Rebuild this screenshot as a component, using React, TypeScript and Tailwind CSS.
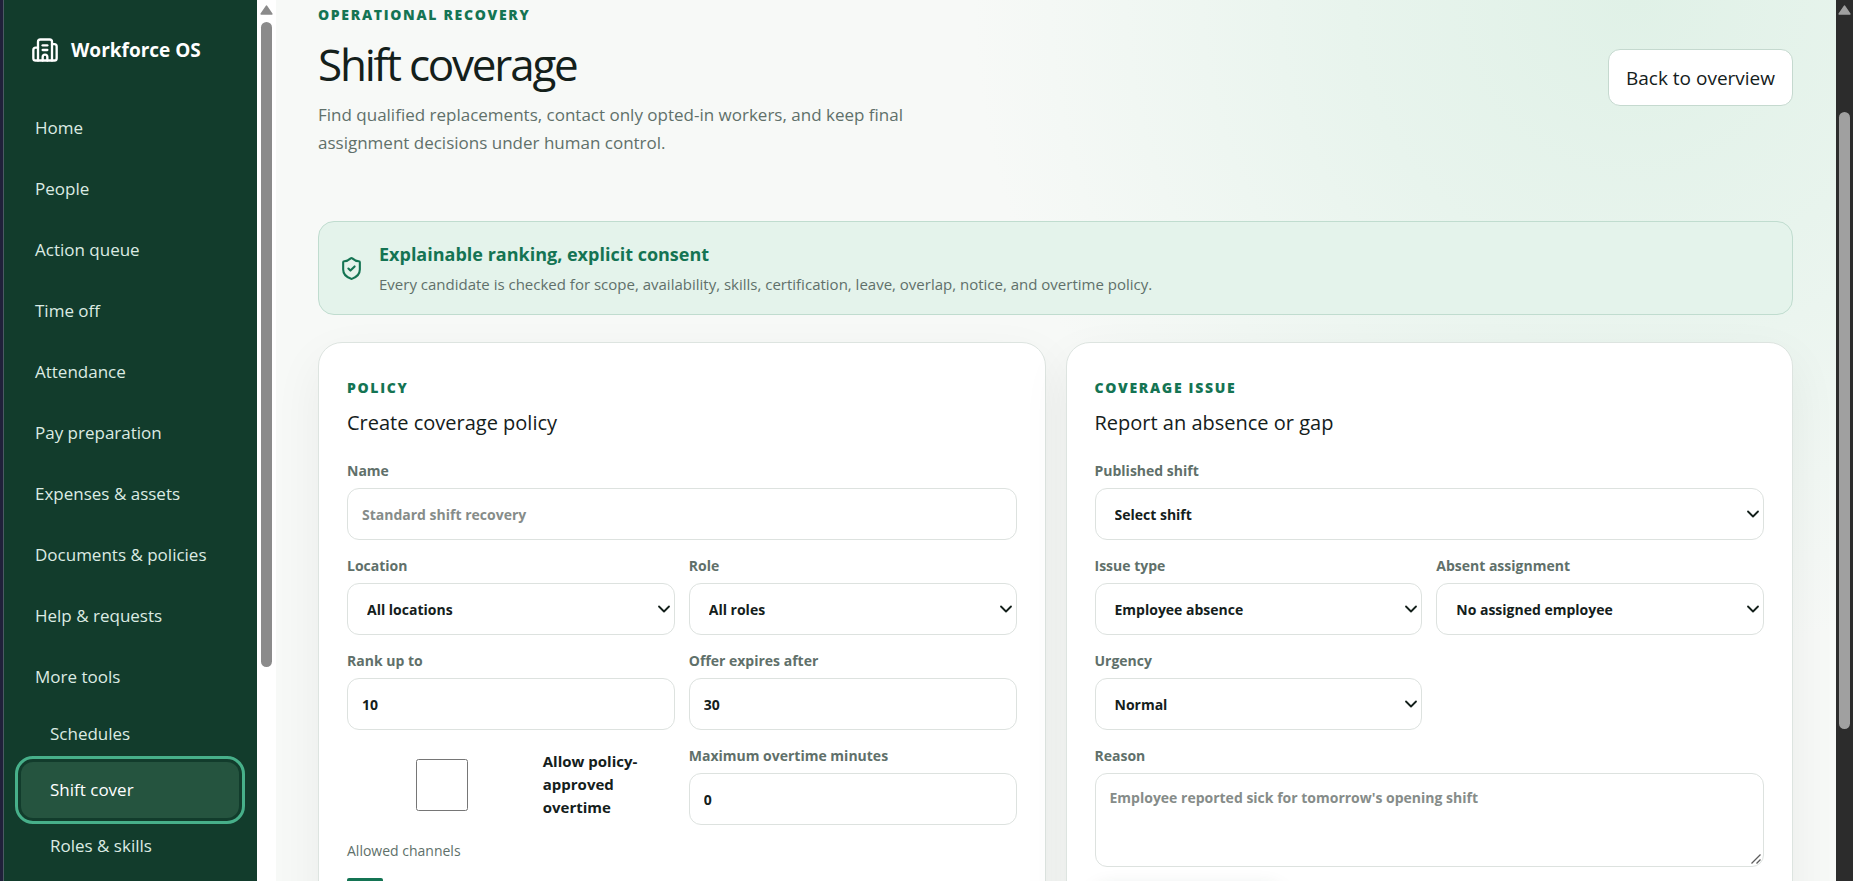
import { useId } from 'react';
import type { ReactNode } from 'react';
import { Building2, ChevronDown, Send, ShieldCheck } from 'lucide-react';

const mainLinks = [
  'Home',
  'People',
  'Action queue',
  'Time off',
  'Attendance',
  'Pay preparation',
  'Expenses & assets',
  'Documents & policies',
  'Help & requests',
];

const toolLinks = ['Schedules', 'Shift cover', 'Roles & skills'];

const control =
  'block w-full rounded-xl border border-[#dde2df] bg-white text-[14px] leading-[23px] font-bold text-[#14201b] placeholder:text-[#868c89] focus:outline-none';

function Eyebrow({ children }: { children: ReactNode }) {
  return <p className="text-[14px] leading-5 font-extrabold uppercase tracking-[0.12em] text-[#147453]">{children}</p>;
}

function Field({ label, wide, children }: { label: string; wide?: boolean; children: (id: string) => ReactNode }) {
  const id = useId();
  return (
    <div className={wide ? 'col-span-2' : ''}>
      <label htmlFor={id} className="block mb-1.5 text-[14px] leading-[23px] font-bold text-[#60706a]">
        {label}
      </label>
      {children(id)}
    </div>
  );
}

function InputField({ label, value, placeholder, wide }: { label: string; value?: string; placeholder?: string; wide?: boolean }) {
  return (
    <Field label={label} wide={wide}>
      {(id) => <input id={id} className={`${control} h-[52px] px-3.5`} defaultValue={value} placeholder={placeholder} />}
    </Field>
  );
}

function SelectField({ label, option, wide }: { label: string; option: string; wide?: boolean }) {
  return (
    <Field label={label} wide={wide}>
      {(id) => (
        <div className="relative">
          <select id={id} className={`${control} h-[52px] appearance-none px-[19px]`}>
            <option>{option}</option>
          </select>
          <ChevronDown className="pointer-events-none absolute top-4 right-px size-5" strokeWidth={2.2} />
        </div>
      )}
    </Field>
  );
}

function Panel({ eyebrow, title, children }: { eyebrow: string; title: string; children: ReactNode }) {
  return (
    <section className="rounded-3xl border border-[#dde4e0] bg-white px-7 pt-[35px] pb-8 shadow-[0_18px_50px_rgba(24,40,32,0.06)]">
      <Eyebrow>{eyebrow}</Eyebrow>
      <h2 className="mt-[9px] text-[20px] leading-8 text-[#14201b]">{title}</h2>
      <form className="mt-5 grid grid-cols-2 gap-3.5">{children}</form>
    </section>
  );
}

function ScrollArrow({ className }: { className: string }) {
  return (
    <svg viewBox="0 0 13 10" className={`w-[13px] h-2.5 ${className}`} aria-hidden="true">
      <path d="M6.5 1.2 11.8 9H1.2Z" fill="currentColor" stroke="currentColor" strokeWidth="1.6" strokeLinejoin="round" />
    </svg>
  );
}

export default function App() {
  return (
    <div className="flex h-screen overflow-hidden bg-[#f7f9f7] font-['Open_Sans','Noto_Sans',sans-serif] text-[#14201b]">
      <aside className="flex w-[276px] shrink-0 border-l-3 border-[#20213a] bg-white">
        <div className="w-[254px] overflow-hidden border-l border-[#4b5a63] bg-[#123c2c] pt-8 pr-[18px] pl-[17px]">
          <a href="#" className="flex items-center gap-3 pl-2.5 text-[19px] leading-9 font-bold text-white">
            <Building2 size={28} strokeWidth={2} />
            Workforce OS
          </a>
          <nav className="mt-[31px] flex flex-col gap-1 text-[17px] leading-6 text-[#dcebe3]">
            {mainLinks.map((link) => (
              <a key={link} href="#" className="flex h-[57px] items-center rounded-xl px-3.5">
                {link}
              </a>
            ))}
            <details open>
              <summary className="mb-px flex h-[57px] items-center px-3.5 list-none">More tools</summary>
              {toolLinks.map((link) => (
                <a
                  key={link}
                  href="#"
                  className={`flex h-14 items-center rounded-xl px-[29px] ${
                    link === 'Shift cover' ? 'bg-[#25543f] text-white outline-3 outline-offset-3 outline-[#47b08a]' : ''
                  }`}
                >
                  {link}
                </a>
              ))}
            </details>
          </nav>
        </div>
        <div className="flex grow flex-col items-center pt-[5px]">
          <ScrollArrow className="text-[#8b8b8b]" />
          <div className="mt-[7px] h-[645px] w-[11px] rounded-full bg-[#8b8b8b]" />
        </div>
      </aside>

      <main className="grow overflow-hidden bg-[radial-gradient(circle_at_87%_0px,#e0f1e7_0px,#e8f4ed_280px,#f7f9f7_660px)] pr-[43px] pl-[42px]">
        <header className="flex items-start justify-between pt-[5px]">
          <div>
            <Eyebrow>Operational recovery</Eyebrow>
            <h1 className="mt-[11px] text-[44px] leading-14 tracking-tighter">Shift coverage</h1>
            <p className="mt-[9px] max-w-[600px] text-[17px] leading-7 text-[#60706a]">
              Find qualified replacements, contact only opted-in workers, and keep final assignment decisions under human
              control.
            </p>
          </div>
          <button className="mt-11 h-[57px] rounded-xl border border-[#c5d9cf] bg-white px-[17px] pt-0.5 text-[19px]">
            Back to overview
          </button>
        </header>

        <section className="mt-16 flex h-[94px] items-center gap-[15px] rounded-2xl border border-[#c0dccf] bg-[#e4f3eb] px-5 text-[#147453]">
          <ShieldCheck size={25} />
          <div>
            <h2 className="text-[18px] leading-7 font-bold">Explainable ranking, explicit consent</h2>
            <p className="mt-1 text-[15px] leading-6 text-[#60706a]">
              Every candidate is checked for scope, availability, skills, certification, leave, overlap, notice, and
              overtime policy.
            </p>
          </div>
        </section>

        <div className="mt-[27px] grid grid-cols-2 gap-5">
          <Panel eyebrow="Policy" title="Create coverage policy">
            <InputField label="Name" placeholder="Standard shift recovery" wide />
            <SelectField label="Location" option="All locations" />
            <SelectField label="Role" option="All roles" />
            <InputField label="Rank up to" value="10" />
            <InputField label="Offer expires after" value="30" />
            <label className="flex items-center gap-1.5 text-[15px] leading-[23px] font-bold">
              <input type="checkbox" className="h-[52px] min-w-0 grow" />
              <span className="w-[132px] shrink-0 pr-6">Allow policy-approved overtime</span>
            </label>
            <InputField label="Maximum overtime minutes" value="0" />
            <fieldset className="col-span-2">
              <legend className="text-[14px] leading-[23px] text-[#60706a]">Allowed channels</legend>
              <input type="checkbox" defaultChecked aria-label="In-app" className="mt-4 size-9 accent-[#147453]" />
            </fieldset>
          </Panel>

          <Panel eyebrow="Coverage issue" title="Report an absence or gap">
            <SelectField label="Published shift" option="Select shift" wide />
            <SelectField label="Issue type" option="Employee absence" />
            <SelectField label="Absent assignment" option="No assigned employee" />
            <SelectField label="Urgency" option="Normal" />
            <Field label="Reason" wide>
              {(id) => (
                <div className="relative">
                  <textarea
                    id={id}
                    placeholder="Employee reported sick for tomorrow's opening shift"
                    className={`${control} h-[94px] resize-none px-3.5 py-3`}
                  />
                  <svg
                    viewBox="0 0 10 10"
                    className="pointer-events-none absolute right-[3px] bottom-[3px] size-2.5 text-[#5c5c5c]"
                    fill="none"
                    stroke="currentColor"
                    strokeWidth="1.3"
                    aria-hidden="true"
                  >
                    <path d="M.5 9.5l9-9M5.5 9.5l4-4" />
                  </svg>
                </div>
              )}
            </Field>
            <button
              type="button"
              aria-label="Report issue"
              className="flex h-14 w-[185px] items-center justify-center rounded-xl bg-[#147453] text-white shadow-[0_8px_20px_rgba(20,60,45,0.15)]"
            >
              <Send size={20} />
            </button>
          </Panel>
        </div>
      </main>

      <div className="flex w-[17px] shrink-0 flex-col items-center bg-[#2c2c2c] pt-[5px]">
        <ScrollArrow className="text-[#a0a0a0]" />
        <div className="mt-[97px] h-[617px] w-[11px] rounded-full bg-[#a0a0a0]" />
      </div>
    </div>
  );
}
